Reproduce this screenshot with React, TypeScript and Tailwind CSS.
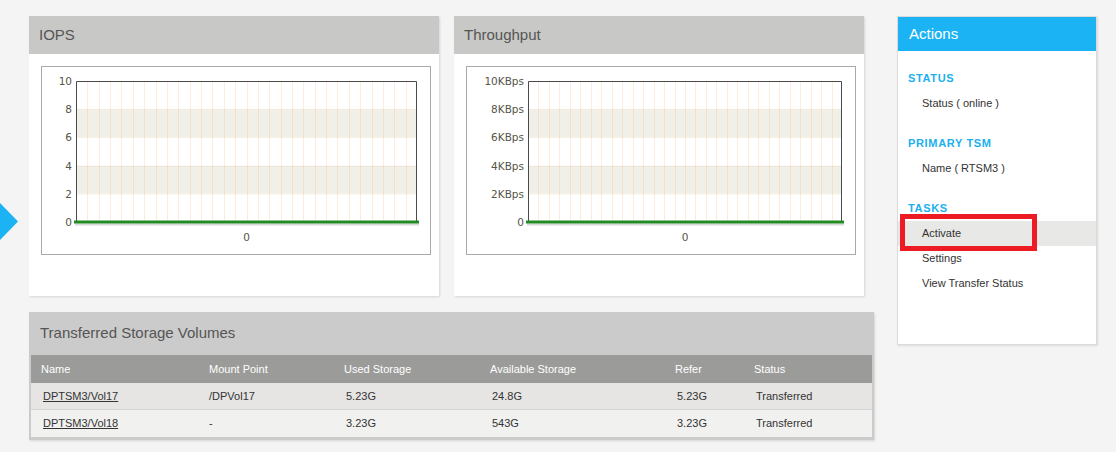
import React from "react";

function Chart({ labels, plotL }: { labels: string[]; plotL: number }) {
  const plotR = 375;
  const top = 14;
  const bottom = 155;
  const w = plotR - plotL;
  const step = (bottom - top) / 5;
  const vlines = Array.from({ length: 29 }, (_, i) => Math.round(plotL + ((i + 1) * w) / 30) + 0.5);
  return (
    <svg width={388} height={187} className="block">
      <rect x={plotL} y={top + step} width={w} height={step} fill="#f0f0e9" />
      <rect x={plotL} y={top + 3 * step} width={w} height={step} fill="#f0f0e9" />
      {vlines.map((x) => (
        <line key={x} x1={x} x2={x} y1={top} y2={bottom} stroke="rgba(250,175,115,0.25)" strokeWidth={1} />
      ))}
      {[1, 2, 3, 4].map((i) => (
        <line
          key={i}
          x1={plotL}
          x2={plotR}
          y1={Math.round(top + i * step) + 0.5}
          y2={Math.round(top + i * step) + 0.5}
          stroke="rgba(250,175,115,0.12)"
          strokeWidth={1}
        />
      ))}
      <path
        d={`M${plotL + 0.5} ${bottom} V${top + 0.5} H${plotR - 0.5} V${bottom}`}
        fill="none"
        stroke="#4a4a4a"
        strokeWidth={1}
      />
      <line x1={plotL - 1} x2={plotR + 2} y1={bottom + 2.5} y2={bottom + 2.5} stroke="rgba(0,0,0,0.15)" strokeWidth={2} />
      <line x1={plotL - 2} x2={plotR + 2} y1={bottom} y2={bottom} stroke="#228a22" strokeWidth={3} />
      {labels.map((l, i) => (
        <text
          key={l}
          x={plotL - 4}
          y={top + i * step + 4}
          textAnchor="end"
          fontFamily="'DejaVu Sans', Verdana, sans-serif"
          fontSize={10.5}
          fill="#555548"
        >
          {l}
        </text>
      ))}
      <text
        x={(plotL + plotR) / 2}
        y={174}
        textAnchor="middle"
        fontFamily="'DejaVu Sans', Verdana, sans-serif"
        fontSize={10.5}
        fill="#555548"
      >
        0
      </text>
    </svg>
  );
}

function ChartCard({ title, labels, plotL }: { title: string; labels: string[]; plotL: number }) {
  return (
    <div className="w-[410px] h-[280px] bg-white shadow-[1px_1px_2px_rgba(0,0,0,0.12)]">
      <div className="h-[38px] bg-[#c8c8c6] flex items-center pl-[10px] text-[15px] text-[#555]">{title}</div>
      <div className="pl-[12px] pt-[12px]">
        <div className="w-[390px] h-[189px] border border-[#aaaaaa]">
          <Chart labels={labels} plotL={plotL} />
        </div>
      </div>
    </div>
  );
}

const rows = [
  ["DPTSM3/Vol17", "/DPVol17", "5.23G", "24.8G", "5.23G", "Transferred"],
  ["DPTSM3/Vol18", "-", "3.23G", "543G", "3.23G", "Transferred"],
];

function TableCard() {
  const cols = "grid grid-cols-[168px_135px_146px_185px_79px_1fr]";
  return (
    <div className="w-[845px] bg-[#cbcbcb] px-[2px] pb-[3px] shadow-[1px_1px_2px_rgba(0,0,0,0.12)]">
      <div className="h-[43px] flex items-center pl-[9px] text-[15px] text-[#555]">Transferred Storage Volumes</div>
      <div className={`${cols} h-[28px] items-center bg-[#9b9b99] text-white text-[11px]`}>
        {["Name", "Mount Point", "Used Storage", "Available Storage", "Refer", "Status"].map((h) => (
          <div key={h} className="pl-[10px]">
            {h}
          </div>
        ))}
      </div>
      {rows.map((r, ri) => (
        <div
          key={ri}
          className={`${cols} items-center text-[11px] text-[#333] ${
            ri === 0 ? "h-[27px] bg-[#e6e5e3] border-b border-[#d4d4d4]" : "h-[27px] bg-[#f1f1f0]"
          }`}
        >
          {r.map((c, ci) => (
            <div key={ci} className={ci === 1 ? "pl-[10px]" : "pl-[12px]"}>
              {ci === 0 ? <span className="underline">{c}</span> : c}
            </div>
          ))}
        </div>
      ))}
    </div>
  );
}

function Actions() {
  const heading = "h-[25px] flex items-center pl-[10px] text-[11px] font-bold tracking-[0.06em] text-[#1bb0ee]";
  const item = "h-[25px] flex items-center pl-[24px] text-[11px] text-[#333]";
  return (
    <div className="ml-[23px] w-[200px] h-[329px] bg-white border border-[#dadada] shadow-[1px_1px_2px_rgba(0,0,0,0.1)]">
      <div className="h-[34px] bg-[#1bb3f4] flex items-center pl-[11px] text-[15px] text-white">Actions</div>
      <div className="pt-[15px]">
        <div className={heading}>STATUS</div>
        <div className={item}>Status ( online )</div>
        <div className="h-[15px]" />
        <div className={heading}>PRIMARY TSM</div>
        <div className={item}>Name ( RTSM3 )</div>
        <div className="h-[15px]" />
        <div className={heading}>TASKS</div>
        <div className={`${item} bg-[#e8e8e6]`}>Activate</div>
        <div className={item}>Settings</div>
        <div className={item}>View Transfer Status</div>
      </div>
    </div>
  );
}

export default function App() {
  return (
    <div className="relative w-[1116px] h-[452px] overflow-hidden bg-[#f3f4f3] font-['Liberation_Sans',Arial,sans-serif]">
      <svg className="absolute left-0 top-[203px]" width="19" height="37">
        <path d="M0 0 L18 18.5 L0 37Z" fill="#1bb3f3" />
      </svg>
      <div className="flex pt-[16px] pl-[29px]">
        <div className="w-[845px] flex flex-col gap-[16px]">
          <div className="flex gap-[15px]">
            <ChartCard title="IOPS" labels={["10", "8", "6", "4", "2", "0"]} plotL={34} />
            <ChartCard
              title="Throughput"
              labels={["10KBps", "8KBps", "6KBps", "4KBps", "2KBps", "0"]}
              plotL={61}
            />
          </div>
          <TableCard />
        </div>
        <Actions />
      </div>
      <div className="absolute left-[900px] top-[214px] w-[137px] h-[37px] border-[5px] border-[#ed1c24]" />
    </div>
  );
}
